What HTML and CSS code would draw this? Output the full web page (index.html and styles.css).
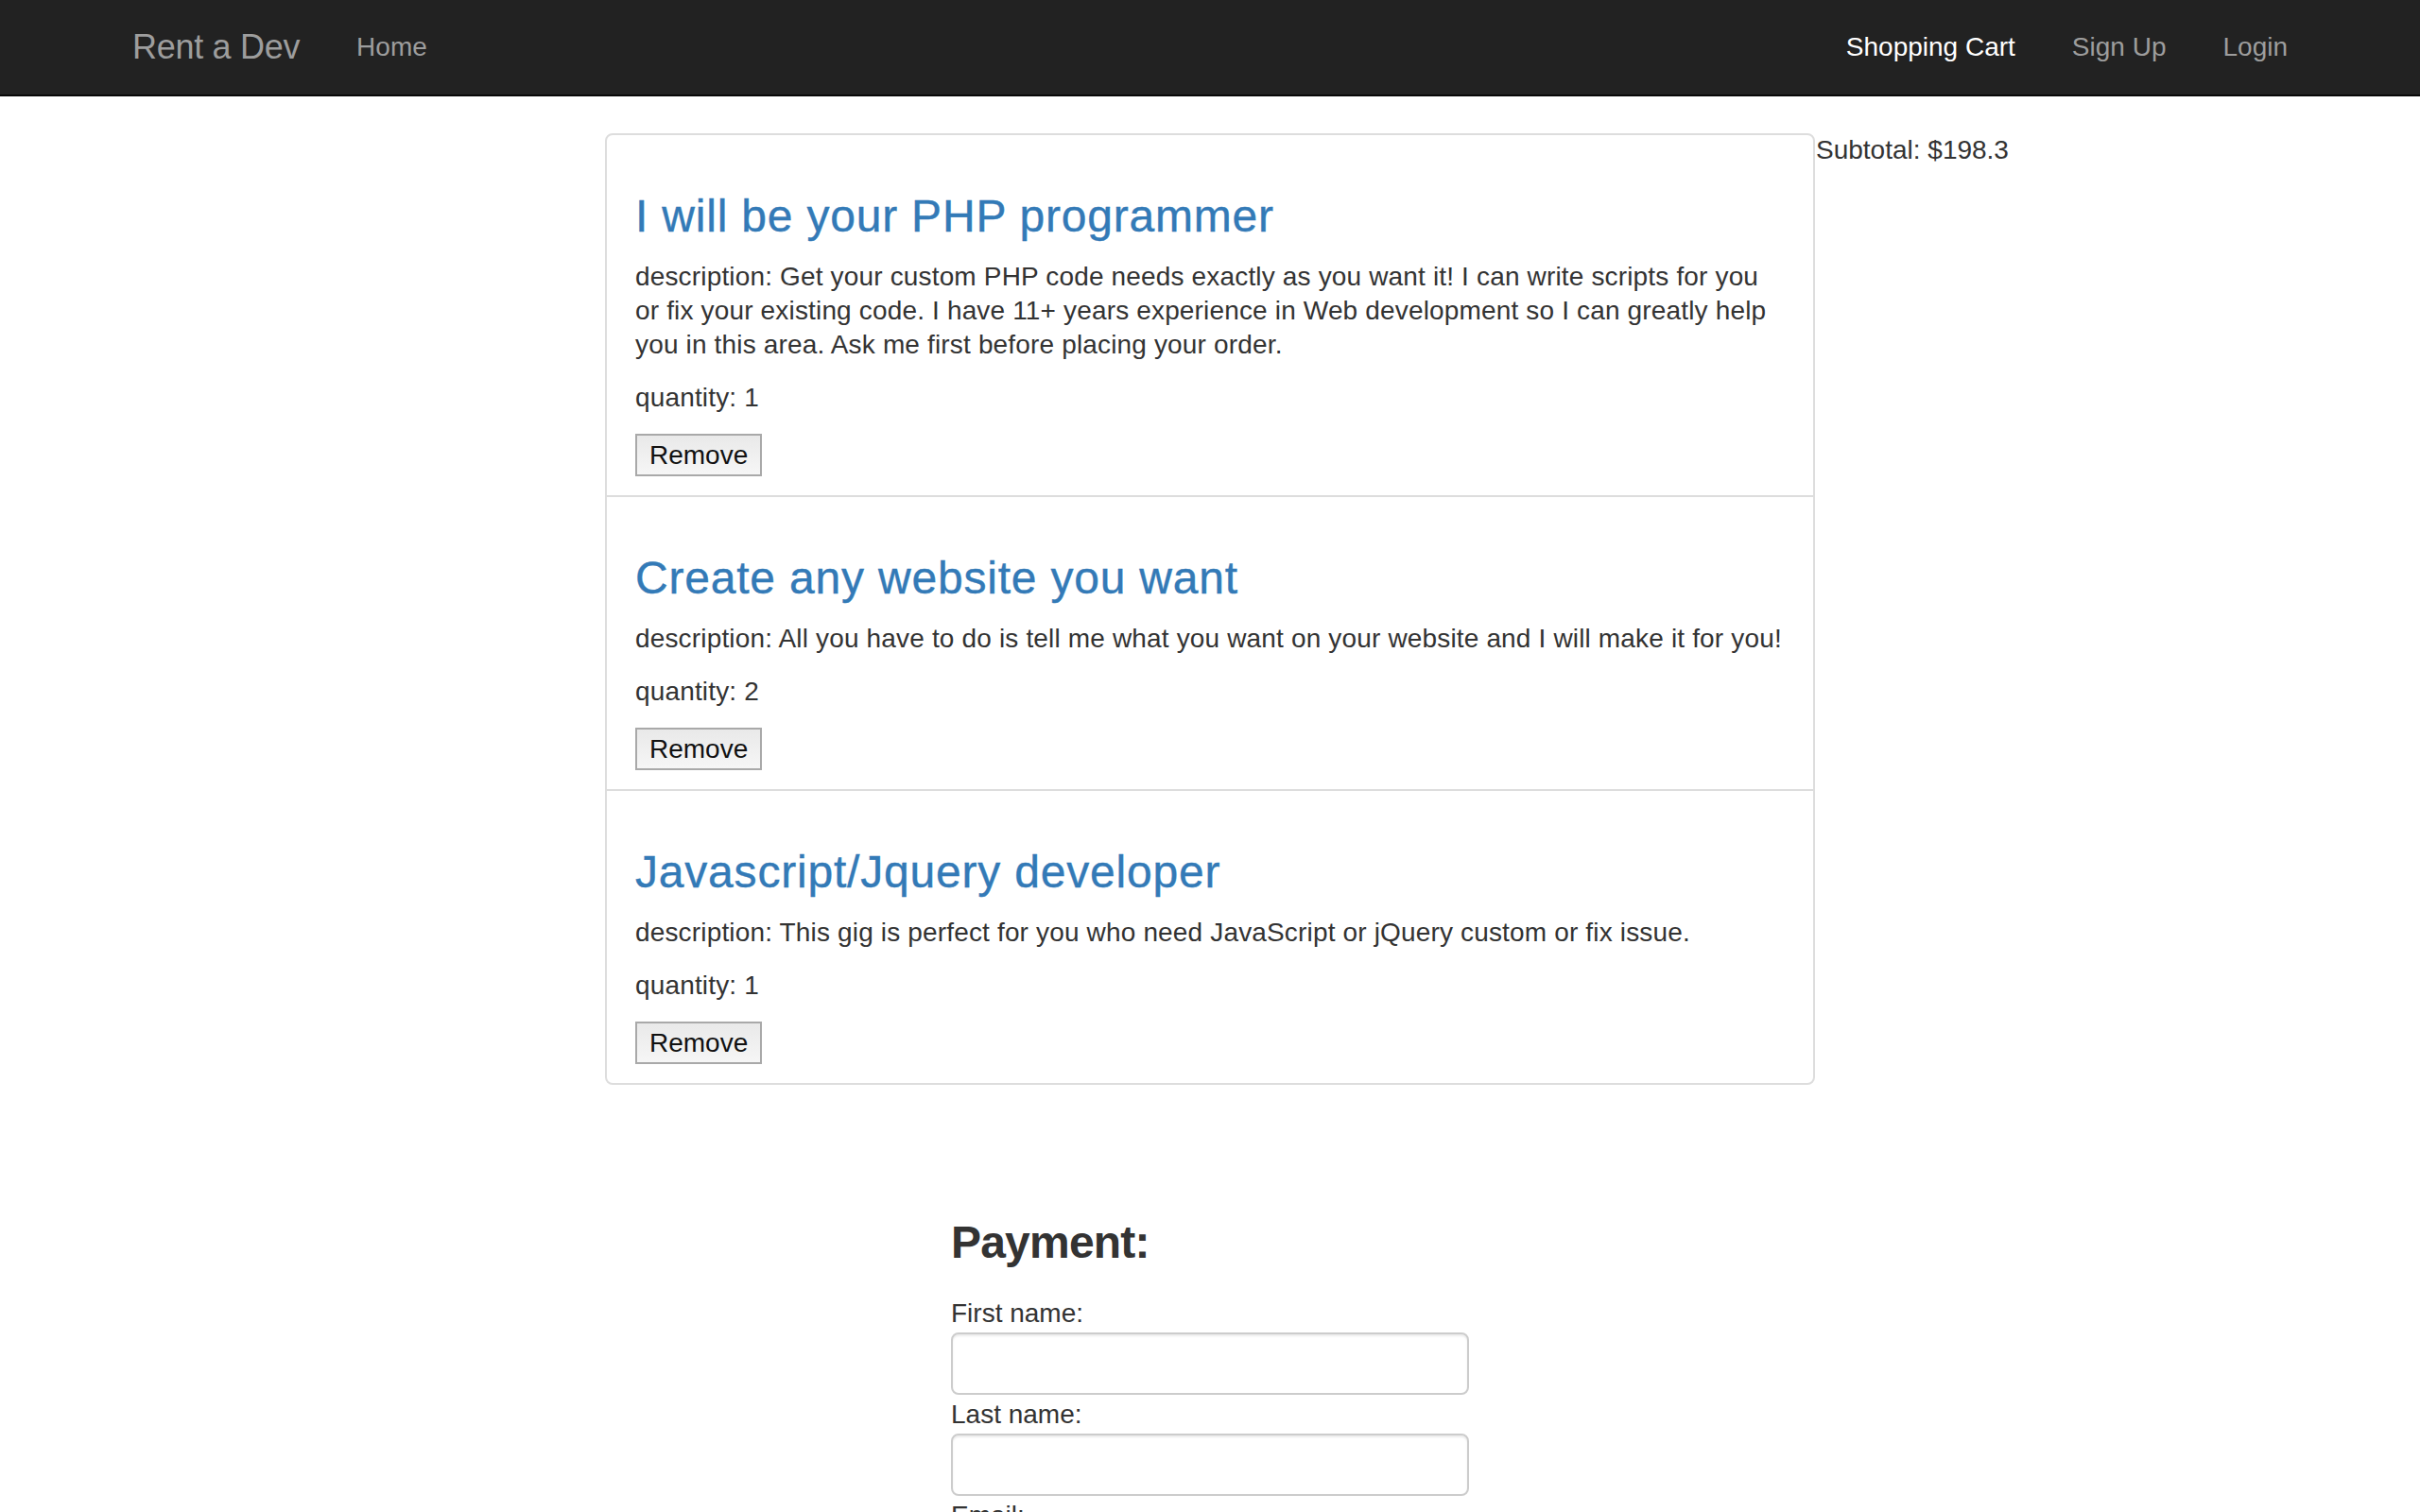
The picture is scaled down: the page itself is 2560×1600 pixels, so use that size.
FILE: index.html
```html
<!DOCTYPE html>
<html lang="en">
<head>
<meta charset="utf-8">
<title>Rent a Dev - Shopping Cart</title>
<link rel="stylesheet" href="styles.css">
</head>
<body>
<nav class="navbar">
  <div class="nav-inner">
    <div class="nav-left">
      <a class="brand" href="#">Rent a Dev</a>
      <a class="nav-link" href="#">Home</a>
    </div>
    <div class="nav-right">
      <a class="nav-link active" href="#">Shopping Cart</a>
      <a class="nav-link" href="#">Sign Up</a>
      <a class="nav-link" href="#">Login</a>
    </div>
  </div>
</nav>

<main class="cart-row">
  <ul class="cart-list">
    <li class="cart-item">
      <h3 class="item-title"><a href="#">I will be your PHP programmer</a></h3>
      <p>description: Get your custom PHP code needs exactly as you want it! I can write scripts for you or fix your existing code. I have 11+ years experience in Web development so I can greatly help you in this area. Ask me first before placing your order.</p>
      <p>quantity: 1</p>
      <button class="btn-remove" type="button">Remove</button>
    </li>
    <li class="cart-item">
      <h3 class="item-title"><a href="#">Create any website you want</a></h3>
      <p>description: All you have to do is tell me what you want on your website and I will make it for you!</p>
      <p>quantity: 2</p>
      <button class="btn-remove" type="button">Remove</button>
    </li>
    <li class="cart-item">
      <h3 class="item-title"><a href="#">Javascript/Jquery developer</a></h3>
      <p>description: This gig is perfect for you who need JavaScript or jQuery custom or fix issue.</p>
      <p>quantity: 1</p>
      <button class="btn-remove" type="button">Remove</button>
    </li>
  </ul>
  <div class="subtotal">Subtotal: $198.3</div>
</main>

<section class="payment">
  <h3 class="payment-title">Payment:</h3>
  <form class="payment-form">
    <label for="fname">First name:</label>
    <input id="fname" type="text">
    <label for="lname">Last name:</label>
    <input id="lname" type="text">
    <label for="email">Email:</label>
    <input id="email" type="text">
  </form>
</section>
</body>
</html>
```

FILE: styles.css
```css
* { box-sizing: border-box; }

html, body {
  margin: 0;
  padding: 0;
  background: #fff;
}

body {
  font-family: "Liberation Sans", Arial, Helvetica, sans-serif;
  font-size: 28px;
  line-height: 36px;
  color: #333;
}

a { text-decoration: none; }

/* Navbar */
.navbar {
  background: #222;
  border-bottom: 2px solid #080808;
  height: 102px;
  margin-bottom: 39px;
}

.nav-inner {
  width: 2340px;
  margin: 0 auto;
  display: flex;
  justify-content: space-between;
  align-items: stretch;
  height: 100px;
}

.nav-left, .nav-right {
  display: flex;
  align-items: stretch;
}

.brand {
  display: block;
  padding: 30px 30px;
  font-size: 36px;
  line-height: 40px;
  letter-spacing: -0.3px;
  color: #9d9d9d;
}

.nav-link {
  display: block;
  padding: 30px 30px;
  font-size: 28px;
  line-height: 40px;
  color: #9d9d9d;
}

.nav-link.active { color: #fff; }

/* Cart */
.cart-row {
  display: flex;
  align-items: flex-start;
  padding-left: 640px;
}

.cart-list {
  list-style: none;
  margin: 0;
  padding: 0;
  width: 1280px;
  flex: 0 0 1280px;
  border: 2px solid #ddd;
  border-radius: 8px;
}

.cart-item {
  padding: 20px 30px;
}

.cart-item + .cart-item {
  border-top: 2px solid #ddd;
}

.item-title {
  margin: 40px 0 20px;
  font-size: 48px;
  line-height: 52px;
  font-weight: 400;
  letter-spacing: 0.8px;
}

.item-title a {
  color: #337ab7;
  -webkit-text-stroke: 0.4px #337ab7;
}

.cart-item p {
  margin: 0 0 20px;
  letter-spacing: 0.16px;
}

.btn-remove {
  display: block;
  height: 45px;
  padding: 0 13px;
  font-family: "Liberation Sans", Arial, Helvetica, sans-serif;
  font-size: 28px;
  line-height: 41px;
  color: #111;
  background: linear-gradient(#e9e9e9, #f6f6f6);
  border: 2px solid #a9a9a9;
  border-radius: 0;
}

.subtotal {
  white-space: nowrap;
  padding-left: 1px;
}

/* Payment */
.payment {
  width: 548px;
  margin: 141px auto 0;
}

.payment-title {
  margin: 0 0 31px;
  font-size: 48px;
  line-height: 52px;
  font-weight: 700;
  letter-spacing: -0.8px;
  color: #333;
}

.payment-form {
  display: flex;
  flex-direction: column;
}

.payment-form label {
  display: block;
  margin-bottom: 2px;
}

.payment-form input {
  display: block;
  width: 548px;
  height: 66px;
  margin: 0 0 3px;
  padding: 12px 24px;
  font-size: 28px;
  border: 2px solid #ccc;
  border-radius: 8px;
  box-shadow: inset 0 2px 2px rgba(0,0,0,0.075);
  background: #fff;
}
```
